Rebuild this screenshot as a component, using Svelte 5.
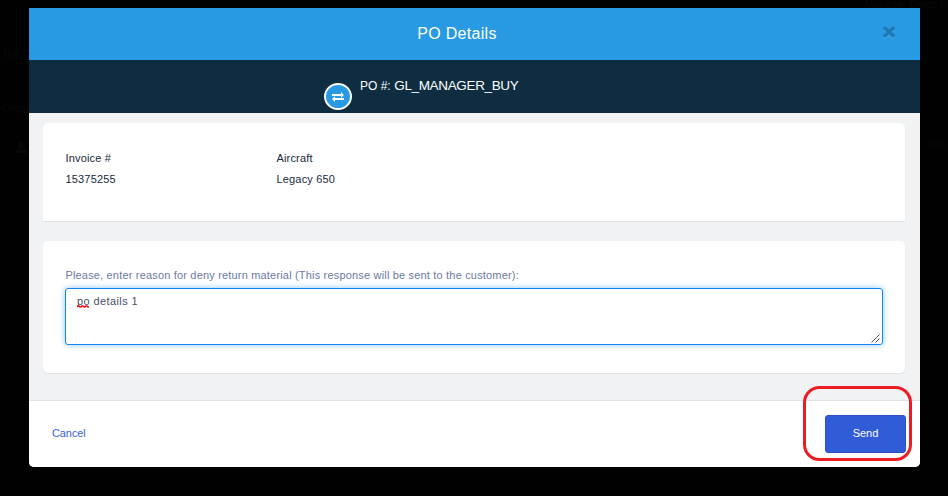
<script>
  const fields = [
    { label: 'Invoice #', value: '15375255' },
    { label: 'Aircraft', value: 'Legacy 650' },
  ];
</script>

<div class="page">
  <span class="ghost" style="left:3px;top:47px;font-size:13px">RET</span>
  <span class="ghost" style="left:2px;top:101px">Organ</span>
  <svg class="ghost" style="left:15px;top:142px" width="12" height="11" viewBox="0 0 12 11"><path d="M4 0h4v4h3L6 8 1 4h3zM0 8h12v3H0z" fill="currentColor" /></svg>
  <span class="ghost top">Manager Diego P</span>
  <span class="ghost" style="left:928px;top:138px;font-size:10px">Den</span>

  <div class="modal" role="dialog" aria-label="PO Details">
    <header>
      <h1>PO Details</h1>
      <button class="close" aria-label="Close">
        <svg width="14" height="14" viewBox="0 0 14 14">
          <path d="M1.8 3.2l10.4 9.6M12.2 3.2L1.8 12.8" stroke="#48a9e8" stroke-width="3.6" />
          <path d="M1.8 2.2l10.4 9.6M12.2 2.2L1.8 11.8" stroke="#1e79b6" stroke-width="3.5" />
        </svg>
      </button>
    </header>
    <div class="order">
      <div class="swap">
        <svg width="12" height="10" viewBox="0 0 12 10" fill="#fff">
          <path d="M0 2h9V0l3 3-3 2.8V4H0zM12 6H3V4.2L0 7l3 3V8h9z" />
        </svg>
      </div>
      <p><span class="po">PO #:</span> <span class="name">GL_MANAGER_BUY</span></p>
    </div>
    <main>
      <section class="card info">
        {#each fields as f}
          <div class="field"><span>{f.label}</span><span>{f.value}</span></div>
        {/each}
      </section>
      <section class="card reason">
        <div class="label">Please, enter reason for deny return material (This response will be sent to the customer):</div>
        <div class="textarea" role="textbox" aria-multiline="true" tabindex="0">
          <span class="typo">po<svg width="13" height="3" viewBox="0 0 13 3"><path d="M0 2l1-1 1 0 1 1 1 0 1-1 1 0 1 1 1 0 1-1 1 0 1 1 1 0" fill="none" stroke="#f00" stroke-width="1.3" /></svg></span> details 1
          <svg class="grip" width="9" height="9" viewBox="0 0 9 9"><path d="M.5 8.5l8-8M4.5 8.5l4-4" stroke="#555" stroke-width="1" /></svg>
        </div>
      </section>
    </main>
    <footer>
      <button class="cancel">Cancel</button>
      <button class="send">Send</button>
    </footer>
  </div>
  <svg class="mark" width="109" height="76" viewBox="0 0 109 76"><rect x="1.5" y="1.5" width="106" height="72" rx="15" fill="none" stroke="#ed1c24" stroke-width="3" /></svg>
</div>

<style>
  :global(body) { background: #010101; overflow: hidden; }
  .page {
    position: relative;
    box-sizing: border-box;
    width: 948px;
    height: 496px;
    padding: 8px 28px 0 29px;
    overflow: hidden;
    background: #010101;
    font-family: "Liberation Sans", Arial, sans-serif;
    font-size: 11px;
    color: #20283a;
  }
  .ghost { position: absolute; color: #080808; font-size: 11px; white-space: nowrap; line-height: 15px; }
  .ghost.top { left: 865px; top: -1px; font-size: 10px; line-height: 11px; letter-spacing: .3px; }
  .modal { position: relative; height: 459px; display: flex; flex-direction: column; background: #f1f2f4; border-radius: 0 0 5px 5px; overflow: hidden; }
  button { border: 0; padding: 0; background: none; font: inherit; }
  header { height: 52px; display: flex; align-items: center; background: #279ae3; }
  h1 { flex: 1; margin: 0 0 0 3px; text-align: center; font-size: 16px; line-height: 20px; font-weight: 400; color: #fff; letter-spacing: .3px; }
  .close { width: 14px; height: 14px; margin-right: 24px; margin-bottom: 4px; }
  .close svg { display: block; }
  .order { height: 53px; display: flex; background: #0f2d40; color: #fff; }
  .swap { box-sizing: border-box; width: 28px; height: 27px; margin: 23px 0 0 295px; border: 2px solid #fff; border-radius: 50%; background: #279ae3; display: flex; align-items: center; justify-content: center; }
  .order p { margin: 17px 0 0 8px; line-height: 17px; white-space: nowrap; }
  .po { font-size: 12px; }
  .name { margin-left: .5px; font-size: 13.5px; letter-spacing: -.35px; }
  main { flex: 1; padding: 10px 15px 0 14px; }
  .card { box-sizing: border-box; background: #fff; border-radius: 5px; box-shadow: 0 1px 1px #dfe1e4; }
  .info { height: 98px; padding: 27px 22.5px 0; display: flex; border-radius: 5px 5px 0 0; }
  .field { width: 211px; display: flex; flex-direction: column; gap: 5px; line-height: 16px; letter-spacing: .17px; }
  .reason { height: 132px; margin-top: 20px; padding: 26px 22px 0; }
  .label { margin-left: .4px; line-height: 16px; letter-spacing: .18px; color: #6b7aa5; white-space: nowrap; }
  .textarea { position: relative; box-sizing: border-box; height: 57px; margin-top: 5px; padding: 4px 11px; border: 1px solid #1484f5; border-radius: 3px; outline: 0; box-shadow: 0 0 6px #91c8f5; line-height: 16px; letter-spacing: .4px; color: #465064; }
  .typo { position: relative; }
  .typo svg { position: absolute; left: 0; bottom: -1px; }
  .grip { position: absolute; right: 2px; bottom: 1px; }
  footer { box-sizing: border-box; height: 67px; border-top: 1px solid #e1e3e5; background: #fff; display: flex; justify-content: space-between; align-items: center; padding: 0 14px 0 23px; }
  .cancel { color: #3c61d6; letter-spacing: -.1px; margin-bottom: 2px; }
  .send { box-sizing: border-box; width: 81px; height: 38px; padding-bottom: 2px; background: #325cd7; border: 1px solid #2b51c2; border-radius: 3px; color: #fff; }
  .mark { position: absolute; left: 803px; top: 386px; pointer-events: none; }
</style>
